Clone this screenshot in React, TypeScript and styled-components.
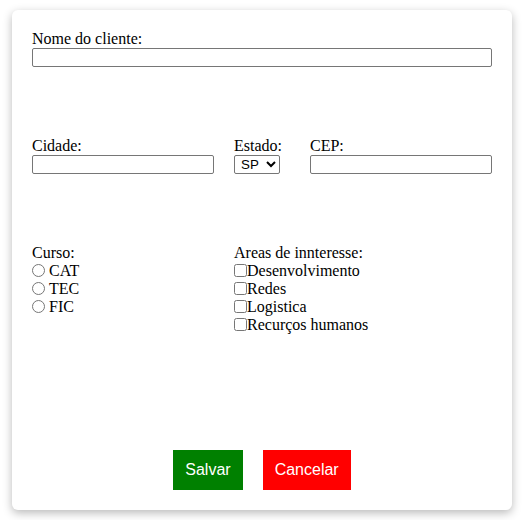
import React from "react";
import styled, { createGlobalStyle } from "styled-components";

const GlobalStyle = createGlobalStyle`
  body {
    margin: 0;
    background: #ffffff;
    font-family: "Liberation Serif", "Times New Roman", serif;
    font-size: 16px;
    color: #000000;
  }
`;

const Page = styled.div`
  padding: 10px 12px;
`;

const Card = styled.form`
  box-sizing: border-box;
  width: 500px;
  height: 500px;
  padding: 20px;
  background: #ffffff;
  border-radius: 6px;
  box-shadow: 0 3px 10px rgba(0, 0, 0, 0.28);
  display: flex;
  flex-direction: column;
`;

const Row = styled.div<{ $cols: string; $top?: number }>`
  display: grid;
  grid-template-columns: ${(p) => p.$cols};
  column-gap: 20px;
  margin-top: ${(p) => p.$top ?? 0}px;
`;

const Field = styled.div`
  display: flex;
  flex-direction: column;
  align-items: flex-start;
  line-height: 18px;
`;

const Label = styled.label`
  display: block;
`;

const TextInput = styled.input`
  box-sizing: border-box;
  width: 100%;
  height: 19px;
  margin: 0;
  padding: 1px 2px;
  border: 1px solid #767676;
  border-radius: 2px;
  font-family: "Liberation Sans", Arial, sans-serif;
  font-size: 13.33px;
`;

const Select = styled.select`
  box-sizing: border-box;
  height: 19px;
  margin: 0;
  padding: 0 0 0 2px;
  border: 1px solid #767676;
  border-radius: 2px;
  background: #ffffff;
  font-family: "Liberation Sans", Arial, sans-serif;
  font-size: 13.33px;
  color: #000000;
`;

const Option = styled.label`
  display: block;
  height: 18px;
  line-height: 18px;
  white-space: nowrap;
`;

const Radio = styled.input`
  width: 13px;
  height: 13px;
  margin: 0 4px 0 0;
  vertical-align: -1px;
`;

const Check = styled.input`
  width: 13px;
  height: 13px;
  margin: 0;
  vertical-align: -1px;
`;

const Actions = styled.div`
  margin-top: auto;
  display: flex;
  justify-content: center;
  gap: 20px;
`;

const Button = styled.button<{ $tone: "save" | "cancel" }>`
  height: 40px;
  padding: 0 12px;
  border: none;
  border-radius: 0;
  background: ${(p) => (p.$tone === "save" ? "#008000" : "#ff0000")};
  color: #ffffff;
  font-family: "Liberation Sans", Arial, sans-serif;
  font-size: 16px;
  cursor: pointer;
`;

export default function App() {
  return (
    <Page>
      <GlobalStyle />
      <Card onSubmit={(e) => e.preventDefault()}>
        <Field>
          <Label htmlFor="nome">Nome do cliente:</Label>
          <TextInput id="nome" type="text" />
        </Field>

        <Row $cols="182px 56px 182px" $top={70}>
          <Field>
            <Label htmlFor="cidade">Cidade:</Label>
            <TextInput id="cidade" type="text" />
          </Field>
          <Field>
            <Label htmlFor="estado">Estado:</Label>
            <Select id="estado" defaultValue="SP">
              <option value="SP">SP</option>
              <option value="RJ">RJ</option>
              <option value="MG">MG</option>
            </Select>
          </Field>
          <Field>
            <Label htmlFor="cep">CEP:</Label>
            <TextInput id="cep" type="text" />
          </Field>
        </Row>

        <Row $cols="182px 1fr" $top={70}>
          <Field>
            <Label>Curso:</Label>
            {["CAT", "TEC", "FIC"].map((c) => (
              <Option key={c}>
                <Radio type="radio" name="curso" value={c} />
                {c}
              </Option>
            ))}
          </Field>
          <Field>
            <Label>Areas de innteresse:</Label>
            {["Desenvolvimento", "Redes", "Logistica", "Recurços humanos"].map(
              (a) => (
                <Option key={a}>
                  <Check type="checkbox" value={a} />
                  {a}
                </Option>
              )
            )}
          </Field>
        </Row>

        <Actions>
          <Button type="submit" $tone="save">
            Salvar
          </Button>
          <Button type="button" $tone="cancel">
            Cancelar
          </Button>
        </Actions>
      </Card>
    </Page>
  );
}
